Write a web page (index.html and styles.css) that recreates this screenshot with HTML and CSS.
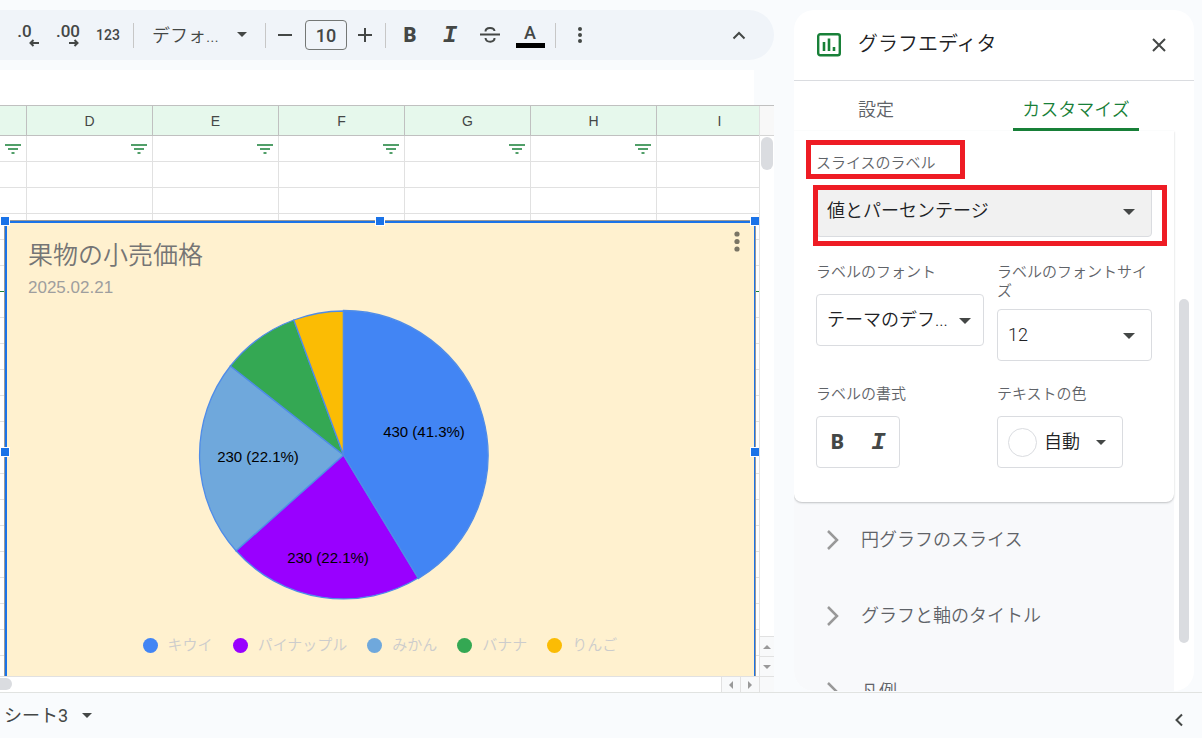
FILE: index.html
```
<!DOCTYPE html>
<html lang="ja">
<head>
    <meta charset="utf-8">
    <title>果物の小売価格</title>
    <link rel="stylesheet" href="styles.css">
</head>
<body>
<div class="main">
    <div class="sheet">
        <div class="toolbar">
            <button class="tool decimal" aria-label="小数点以下の桁数を減らす"><span>.0</span>
                <svg width="10" height="8" viewBox="0 0 10 8"><path d="M10 4H1.5M4.500 1L1.500 4l3 3"/></svg>
            </button>
            <button class="tool decimal" aria-label="小数点以下の桁数を増やす"><span>.00</span>
                <svg width="10" height="8" viewBox="0 0 10 8"><path d="M0 4h8.500M5.500 1l3 3-3 3"/></svg>
            </button>
            <button class="tool num">123</button>
            <span class="sep"></span>
            <button class="font-menu">デフォ...<span class="arrow"></span></button>
            <span class="sep"></span>
            <button class="tool step" aria-label="縮小"><svg width="14" height="14" viewBox="0 0 14 14"><path d="M0 7h14"/></svg></button>
            <input class="size" type="text" value="10" aria-label="フォントサイズ">
            <button class="tool step" aria-label="拡大"><svg width="14" height="14" viewBox="0 0 14 14"><path d="M0 7h14M7 0v14"/></svg></button>
            <span class="sep"></span>
            <button class="tool bold">B</button>
            <button class="tool italic">I</button>
            <button class="tool" aria-label="取り消し線"><svg width="20" height="18" viewBox="0 0 20 18"><path d="M0 8.500h20M5.500 5.500C5.500 1 14 1 14.500 5M5.500 12c.5 5 9.500 5 9 0"/></svg></button>
            <button class="tool color"><span>A</span></button>
            <span class="sep"></span>
            <button class="tool" aria-label="その他"><svg width="6" height="18" viewBox="0 0 6 18"><g fill="#444746" stroke="none"><circle cx="3" cy="3" r="2"/><circle cx="3" cy="9" r="2"/><circle cx="3" cy="15" r="2"/></g></svg></button>
            <button class="tool collapse" aria-label="メニューを非表示"><svg width="14" height="10" viewBox="0 0 14 10"><path d="M1.500 8.500L7 3 12.500 8.500"/></svg></button>
        </div>
        <div class="formula"></div>

        <div class="grid">
            <div class="cells">
                <table>
                    <colgroup><col class="first"><col><col><col><col><col><col></colgroup>
                    <thead>
                    <tr><th></th><th>D</th><th>E</th><th>F</th><th>G</th><th>H</th><th>I</th></tr>
                    </thead>
                    <tbody id="rows"></tbody>
                </table>

                <div class="chart">
                    <h2>果物の小売価格</h2>
                    <p>2025.02.21</p>
                    <button class="chart-menu" aria-label="グラフのメニュー"><svg width="6" height="21" viewBox="0 0 6 21"><circle cx="3" cy="3" r="2.600"/><circle cx="3" cy="10.500" r="2.600"/><circle cx="3" cy="18" r="2.600"/></svg></button>
                    <svg class="pie" width="292" height="292" viewBox="0 0 292 292">
                        <g stroke="#4f8ce8" stroke-width="1.300">
                            <path fill="#9900ff" d="M145.500 146L220.200 269A144 144 0 0 1 38 241.800z"/>
                            <path fill="#6fa8dc" d="M145.500 146L38 241.800A144 144 0 0 1 32.400 57z"/>
                            <path fill="#34a853" d="M145.500 146L32.400 57A144 144 0 0 1 95.800 11z"/>
                            <path fill="#fbbc04" d="M145.500 146L95.800 11A144 144 0 0 1 145.500 2z"/>
                            <path fill="#4285f4" d="M145.500 146V1.500A144.500 144.500 0 0 1 220.500 269.500z"/>
                        </g>
                        <text x="226" y="128">430 (41.3%)</text>
                        <text x="130" y="254">230 (22.1%)</text>
                        <text x="60" y="153">230 (22.1%)</text>
                    </svg>
                    <ul class="legend">
                        <li class="kiwi">キウイ</li>
                        <li class="pine">パイナップル</li>
                        <li class="orange">みかん</li>
                        <li class="banana">バナナ</li>
                        <li class="apple">りんご</li>
                    </ul>
                    <i class="handle tl"></i><i class="handle tc"></i><i class="handle tr"></i>
                    <i class="handle ml"></i><i class="handle mr"></i>
                </div>
            </div>
            <div class="vscroll">
                <div class="corner"></div>
                <div class="vthumb"></div>
                <button class="sb" aria-label="上"><span class="tri up"></span></button>
                <button class="sb" aria-label="下"><span class="tri down"></span></button>
            </div>
        </div>
        <div class="hscroll">
            <div class="hthumb"></div>
            <button class="sb" aria-label="左"><span class="tri left"></span></button>
            <button class="sb" aria-label="右"><span class="tri right"></span></button>
            <div class="sb-end"></div>
        </div>
    </div>

    <div class="panel">
        <div class="panel-head">
            <svg width="24" height="24" viewBox="0 0 24 24" fill="none" stroke="#188038"><rect x="1.200" y="1.200" width="21.600" height="21" rx="2" stroke-width="2.400"/><path stroke-width="2.600" d="M7 9v9M12 5.500V18M17 14v4"/></svg>
            <h1>グラフエディタ</h1>
            <button aria-label="閉じる"><svg width="14" height="14" viewBox="0 0 14 14"><path d="M1 1l12 12M13 1L1 13"/></svg></button>
        </div>
        <div class="tabs">
            <button>設定</button>
            <button class="active">カスタマイズ</button>
        </div>
        <div class="scroller">
            <div class="content">
                <div class="card">
                    <div class="field">
                        <label for="slice">スライスのラベル</label>
                        <div class="drop grey"><select id="slice"><option>値とパーセンテージ</option></select></div>
                    </div>
                    <div class="fields">
                        <div class="field">
                            <label for="font">ラベルのフォント</label>
                            <div class="drop narrow"><select id="font"><option>テーマのデフ...</option></select></div>
                        </div>
                        <div class="field long">
                            <label for="fsize">ラベルのフォントサイズ</label>
                            <div class="drop"><select id="fsize"><option>12</option></select></div>
                        </div>
                        <div class="field">
                            <span class="label">ラベルの書式</span>
                            <div class="format"><button class="bold">B</button><button class="italic">I</button></div>
                        </div>
                        <div class="field">
                            <label for="color">テキストの色</label>
                            <button class="auto" id="color"><span class="dot"></span>自動<span class="arrow"></span></button>
                        </div>
                    </div>
                    <div class="mark mark1"></div>
                    <div class="mark mark2"></div>
                </div>
                <button class="section"><svg width="14" height="22" viewBox="0 0 14 22"><path d="M2 2l9 9-9 9"/></svg>円グラフのスライス</button>
                <button class="section"><svg width="14" height="22" viewBox="0 0 14 22"><path d="M2 2l9 9-9 9"/></svg>グラフと軸のタイトル</button>
                <button class="section"><svg width="14" height="22" viewBox="0 0 14 22"><path d="M2 2l9 9-9 9"/></svg>凡例</button>
            </div>
            <div class="pthumb"></div>
        </div>
    </div>
</div>
<div class="footer">
    <button class="tab">シート3<span class="arrow"></span></button>
    <button class="side" aria-label="サイドパネルを表示"><svg width="10" height="14" viewBox="0 0 10 14"><path d="M8 1.500L2.500 7 8 12.500"/></svg></button>
</div>
<script>
    var rows = document.getElementById("rows");
    var icon = '<svg width="16" height="10" viewBox="0 0 16 10"><path d="M0 1h16M3 5h10M6.500 9h3"/></svg>';

    for (var r = 0; r < 24; r++) {
        var tr = document.createElement("tr");
        for (var c = 0; c < 7; c++) {
            var td = document.createElement("td");
            //filter icons on the first row, not in column I
            if (r == 0 && c < 6) {
                td.innerHTML = icon;
            }
            tr.appendChild(td);
        }
        //last row of the filter range
        if (r == 5) {
            tr.className = "range-end";
        }
        rows.appendChild(tr);
    }
</script>
</body>
</html>
```
FILE: styles.css
```
* {
    box-sizing: border-box;
}
body {
    margin: 0;
    height: 100vh;
    display: flex;
    flex-direction: column;
    background: #f9fbfd;
    color: #202124;
    font-family: Roboto, "Noto Sans CJK JP", sans-serif;
    font-size: 18px;
    overflow: hidden;
}
button, select, input {
    font: inherit;
    color: inherit;
    border: 0;
    padding: 0;
    background: none;
}
svg {
    display: block;
    flex: none;
}
h1, h2, p, ul {
    margin: 0;
    padding: 0;
    font-weight: 350;
}
.main {
    flex: 1;
    min-height: 0;
    display: flex;
    gap: 20px;
    padding: 10px 8px 0 0;
}
.sheet {
    flex: 1;
    min-width: 0;
    display: flex;
    flex-direction: column;
}
.arrow {
    border: 5px solid transparent;
    border-top-color: #444746;
    border-bottom: 0;
}

/* toolbar */
.toolbar {
    height: 50px;
    flex: none;
    display: flex;
    align-items: center;
    padding: 0 15px 0 8px;
    background: #f0f4f9;
    border-radius: 0 25px 25px 0;
    color: #444746;
}
.tool {
    width: 40px;
    height: 30px;
    flex: none;
    display: flex;
    align-items: center;
    justify-content: center;
}
.tool svg {
    fill: none;
    stroke: #444746;
    stroke-width: 2;
}
.decimal {
    flex-direction: column;
    font-size: 17px;
    font-weight: 500;
    line-height: 16px;
}
.decimal span {
    margin-right: 7px;
}
.decimal + .decimal span {
    margin-right: 0;
}
.decimal svg {
    margin-left: 12px;
}
.num {
    font-size: 14px;
    font-weight: 500;
}
.sep {
    width: 1px;
    height: 25px;
    flex: none;
    margin: 0 4px 0 5px;
    background: #c7c7c7;
}
.font-menu {
    width: 122px;
    padding: 0 0 2px 14px;
    display: flex;
    align-items: center;
    gap: 18px;
    font-weight: 350;
}
.step {
    width: 30px;
}
.size {
    width: 42px;
    height: 30px;
    margin: 0 3px 0 5px;
    border: 1px solid #747775;
    border-radius: 4px;
    text-align: center;
    font-weight: 500;
}
.bold {
    font-size: 20px;
    font-weight: 900;
}
.italic {
    font-family: "Liberation Mono", monospace;
    font-size: 24px;
    font-weight: 700;
    font-style: italic;
}
.color span {
    width: 29px;
    border-bottom: 5px solid #000;
    font-weight: 500;
    line-height: 20px;
}
.collapse {
    margin-left: auto;
}
.formula {
    height: 35px;
    flex: none;
    margin: 10px 20px 0 0;
    background: #fff;
}

/* cells */
.grid {
    flex: 1;
    min-height: 0;
    display: flex;
    border-top: 1px solid #c0c0c0;
}
.cells {
    flex: 1;
    min-width: 0;
    position: relative;
    overflow: hidden;
    background: #fff;
}
table {
    width: 783px;
    table-layout: fixed;
    border-spacing: 0;
}
col.first {
    width: 27px;
}
th {
    height: 30px;
    padding: 0;
    background: #e6f8ec;
    border: solid #c0c0c0;
    border-width: 0 1px 1px 0;
    color: #444746;
    font: 14px "Liberation Sans", sans-serif;
}
td {
    height: 26px;
    padding: 0 5px;
    border: solid #e1e1e1;
    border-width: 0 1px 1px 0;
}
td svg {
    margin-left: auto;
    stroke: #188038;
    stroke-width: 1.5;
}
.range-end td {
    border-bottom-color: #188038;
}
.vscroll {
    width: 15px;
    display: flex;
    flex-direction: column;
    background: #fff;
    border-left: 1px solid #e1e1e1;
}
.corner {
    height: 30px;
    background: #f8f8f8;
    border-bottom: 1px solid #d5d5d5;
}
.vthumb {
    height: 33px;
    margin: 1px 1px auto;
    border-radius: 6px;
    background: #dadce0;
}
.sb {
    display: flex;
    align-items: center;
    justify-content: center;
    background: #f8f9fa;
}
.vscroll .sb {
    height: 20px;
    border-top: 1px solid #e1e1e1;
}
.hscroll {
    height: 16px;
    flex: none;
    display: flex;
    background: #fff;
    border-top: 1px solid #e1e1e1;
}
.hthumb {
    width: 12px;
    height: 12px;
    margin: 1px auto 0 0;
    border-radius: 0 6px 6px 0;
    background: #dadce0;
}
.hscroll .sb {
    width: 19px;
    border-left: 1px solid #e1e1e1;
}
.sb-end {
    width: 15px;
    border-left: 1px solid #e1e1e1;
    background: #f8f9fa;
}
.tri {
    border: 4px solid transparent;
}
.up {
    border-top: 0;
    border-bottom-color: #999;
}
.down {
    border-bottom: 0;
    border-top-color: #999;
}
.left {
    border-left: 0;
    border-right-color: #999;
}
.right {
    border-right: 0;
    border-left-color: #999;
}

/* chart lies over the cells */
.chart {
    position: absolute;
    top: 115px;
    left: 5px;
    right: 4px;
    bottom: -9px;
    padding: 18px 22px 0 21px;
    background: #fff1cf;
    border: 2px solid #1a73e8;
    border-right-width: 1px;
    box-shadow: 0 0 0 1px #999;
}
.chart h2 {
    font-size: 25px;
    line-height: 30px;
    color: #757575;
}
.chart p {
    margin-top: 7px;
    font: 17px/20px "Liberation Sans", sans-serif;
    color: #9e9e9e;
}
.chart-menu {
    position: absolute;
    top: 8px;
    right: 14px;
}
.chart-menu svg {
    fill: #7a7565;
}
.pie {
    margin: 11px 0 0 170px;
    overflow: visible;
    font: 15px "Liberation Sans", sans-serif;
}
.pie text {
    text-anchor: middle;
}
.legend {
    display: flex;
    justify-content: center;
    gap: 20px;
    margin-top: 34px;
    list-style: none;
    font-size: 15px;
    line-height: 20px;
    color: #ccc;
}
.legend li {
    display: flex;
    align-items: center;
    gap: 10px;
}
.legend li::before {
    content: "";
    width: 15px;
    height: 15px;
    border-radius: 50%;
    background: #4285f4;
}
.legend .pine::before {
    background: #9900ff;
}
.legend .orange::before {
    background: #6fa8dc;
}
.legend .banana::before {
    background: #34a853;
}
.legend .apple::before {
    background: #fbbc04;
}
.handle {
    position: absolute;
    width: 10px;
    height: 10px;
    background: #1a73e8;
    border: 1px solid #fff;
}
.tl, .tc, .tr {
    top: -7px;
}
.tl, .ml {
    left: -7px;
}
.tr, .mr {
    right: -6px;
}
.tc {
    left: calc(50% - 6px);
}
.ml, .mr {
    top: calc(50% - 6px);
}

/* chart editor */
.panel {
    width: 400px;
    flex: none;
    display: flex;
    flex-direction: column;
    margin-bottom: 1px;
    background: #fff;
    border-radius: 20px;
    overflow: hidden;
    font-weight: 350;
}
.panel-head {
    height: 71px;
    flex: none;
    display: flex;
    align-items: center;
    gap: 17px;
    padding: 0 28px 0 23px;
    border-bottom: 1px solid #dadce0;
}
.panel-head h1 {
    flex: 1;
    font-size: 20px;
    line-height: 30px;
    padding-bottom: 2px;
}
.panel-head button svg {
    fill: none;
    stroke: #444746;
    stroke-width: 2;
}
.tabs {
    display: grid;
    grid-template-columns: 164px 1fr;
    justify-items: center;
    flex: none;
}
.tabs button {
    height: 50px;
    padding: 10px 9px 0;
    border-bottom: 3px solid transparent;
    color: #5f6368;
    line-height: 28px;
}
.tabs .active {
    color: #188038;
    border-color: #188038;
}
.scroller {
    flex: 1;
    min-height: 0;
    display: flex;
}
.content {
    flex: 1;
    background: #f8f9fb;
}
.card {
    position: relative;
    padding: 23px 22px 34px;
    background: #fff;
    border-radius: 0 0 8px 8px;
    box-shadow: 0 1px 2px rgba(60, 64, 67, .3);
}
.field {
    display: flex;
    flex-direction: column;
    align-items: flex-start;
    gap: 12px;
}
.field label, .field .label {
    font-size: 15px;
    line-height: 19px;
    color: #5f6368;
}
.fields {
    display: grid;
    grid-template-columns: 168px 1fr;
    gap: 24px 13px;
    margin-top: 26px;
}
.long {
    gap: 8px;
}
.drop {
    position: relative;
    width: 100%;
    height: 52px;
    border: 1px solid #dadce0;
    border-radius: 4px;
}
.drop::after {
    content: "";
    position: absolute;
    right: 16px;
    top: 23px;
    border: 6px solid transparent;
    border-top-color: #444746;
    border-bottom: 0;
    pointer-events: none;
}
.narrow::after {
    right: 12px;
}
.grey {
    background: #f1f1f1;
}
.drop select {
    appearance: none;
    width: 100%;
    height: 50px;
    padding: 0 10px 2px;
}
.format {
    display: flex;
    border: 1px solid #dadce0;
    border-radius: 4px;
    color: #444746;
}
.format button {
    width: 41px;
    height: 50px;
}
.auto {
    display: flex;
    align-items: center;
    gap: 7px;
    height: 52px;
    padding: 0 16px 0 10px;
    border: 1px solid #dadce0;
    border-radius: 4px;
    line-height: 24px;
}
.auto .arrow {
    margin-left: 9px;
}
.dot {
    width: 29px;
    height: 29px;
    border: 1px solid #dadce0;
    border-radius: 50%;
}
/* red frames over the form */
.mark {
    position: absolute;
    border: 5px solid #ee1c24;
    pointer-events: none;
}
.mark1 {
    left: 12px;
    top: 9px;
    width: 159px;
    height: 39px;
}
.mark2 {
    left: 19px;
    top: 54px;
    right: 7px;
    height: 61px;
}
.section {
    display: flex;
    align-items: center;
    gap: 21px;
    width: 100%;
    height: 76px;
    padding: 0 0 1px 32px;
    color: #5f6368;
    line-height: 24px;
}
.section svg {
    fill: none;
    stroke: #999;
    stroke-width: 2.5;
}
.pthumb {
    width: 10px;
    height: 344px;
    margin: 168px 5px 0;
    border-radius: 5px;
    background: #dadce0;
}

/* sheet tabs */
.footer {
    height: 46px;
    flex: none;
    display: flex;
    align-items: center;
    justify-content: space-between;
    padding: 0 18px 0 4px;
    border-top: 1px solid #e1e3e1;
}
.tab {
    display: flex;
    align-items: center;
    gap: 14px;
    color: #444746;
    line-height: 24px;
}
.side {
    padding-top: 8px;
}
.side svg {
    fill: none;
    stroke: #444746;
    stroke-width: 2;
}
```
